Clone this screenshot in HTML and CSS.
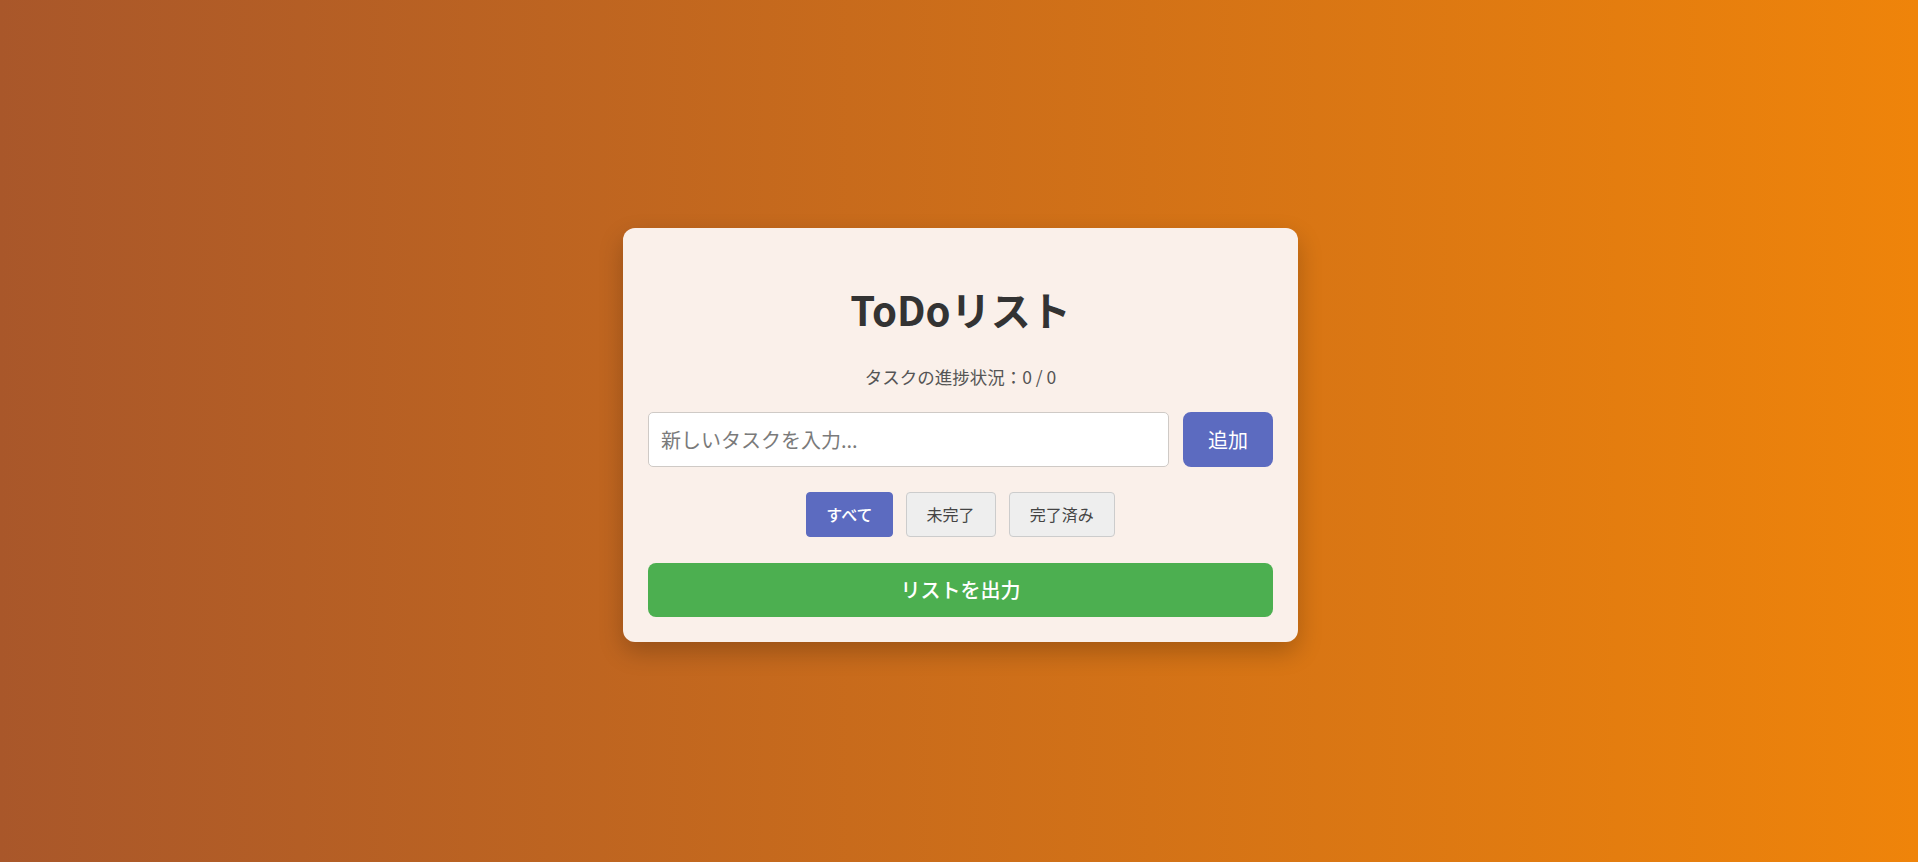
FILE: index.html
```html
<!DOCTYPE html>
<html lang="ja">
<head>
<meta charset="utf-8">
<title>ToDoリスト</title>
<link rel="stylesheet" href="styles.css">
</head>
<body>
  <main class="card">
    <h1 class="title">ToDoリスト</h1>
    <p class="progress">タスクの進捗状況：0 / 0</p>
    <div class="input-row">
      <input class="task-input" type="text" placeholder="新しいタスクを入力...">
      <button class="add-btn">追加</button>
    </div>
    <div class="filters">
      <button class="filter-btn active">すべて</button>
      <button class="filter-btn">未完了</button>
      <button class="filter-btn">完了済み</button>
    </div>
    <button class="export-btn">リストを出力</button>
  </main>
</body>
</html>
```

FILE: styles.css
```css
* { box-sizing: border-box; }

html, body { height: 100%; }

body {
  margin: 0;
  padding: 7px 0 0 3px;
  min-height: 100vh;
  display: flex;
  align-items: center;
  justify-content: center;
  background: linear-gradient(to right, #a9572a, #ef840a);
  font-family: "Noto Sans CJK JP", "Noto Sans", sans-serif;
  color: #333;
}

.card {
  width: 675px;
  padding: 25px;
  background: #faf0ea;
  border-radius: 12px;
  box-shadow: 0 10px 24px rgba(0, 0, 0, 0.22);
  display: flex;
  flex-direction: column;
}

.title {
  margin: 27px 0 27px;
  font-size: 40px;
  line-height: 58px;
  font-weight: 700;
  text-align: center;
  color: #333;
}

.progress {
  margin: 0 0 24px;
  font-size: 17.5px;
  line-height: 23px;
  text-align: center;
  color: #555;
}

.input-row {
  display: flex;
  gap: 14px;
}

.task-input {
  flex: 1;
  height: 55px;
  padding: 0 12px;
  border: 1px solid #cfcac6;
  border-radius: 5px;
  background: #fff;
  font-family: inherit;
  font-size: 20px;
  color: #333;
  outline: none;
}

.task-input::placeholder { color: #7a7a7a; }

.add-btn {
  width: 90px;
  height: 55px;
  border: none;
  border-radius: 8px;
  background: #5c6bc0;
  color: #fff;
  font-family: inherit;
  font-size: 20px;
}

.filters {
  display: flex;
  justify-content: center;
  gap: 13px;
  margin: 25px 0 26px;
}

.filter-btn {
  height: 45px;
  padding: 0 20px;
  border: 1px solid #cccccc;
  border-radius: 4px;
  background: #eeeeee;
  color: #444;
  font-family: inherit;
  font-size: 16px;
}

.filter-btn.active {
  padding: 0 19px;
  background: #5c6bc0;
  border-color: #5c6bc0;
  color: #fff;
  font-weight: 500;
}

.export-btn {
  height: 54px;
  border: none;
  border-radius: 8px;
  background: #4caf50;
  color: #fff;
  font-family: inherit;
  font-size: 20px;
  font-weight: 500;
}
```
